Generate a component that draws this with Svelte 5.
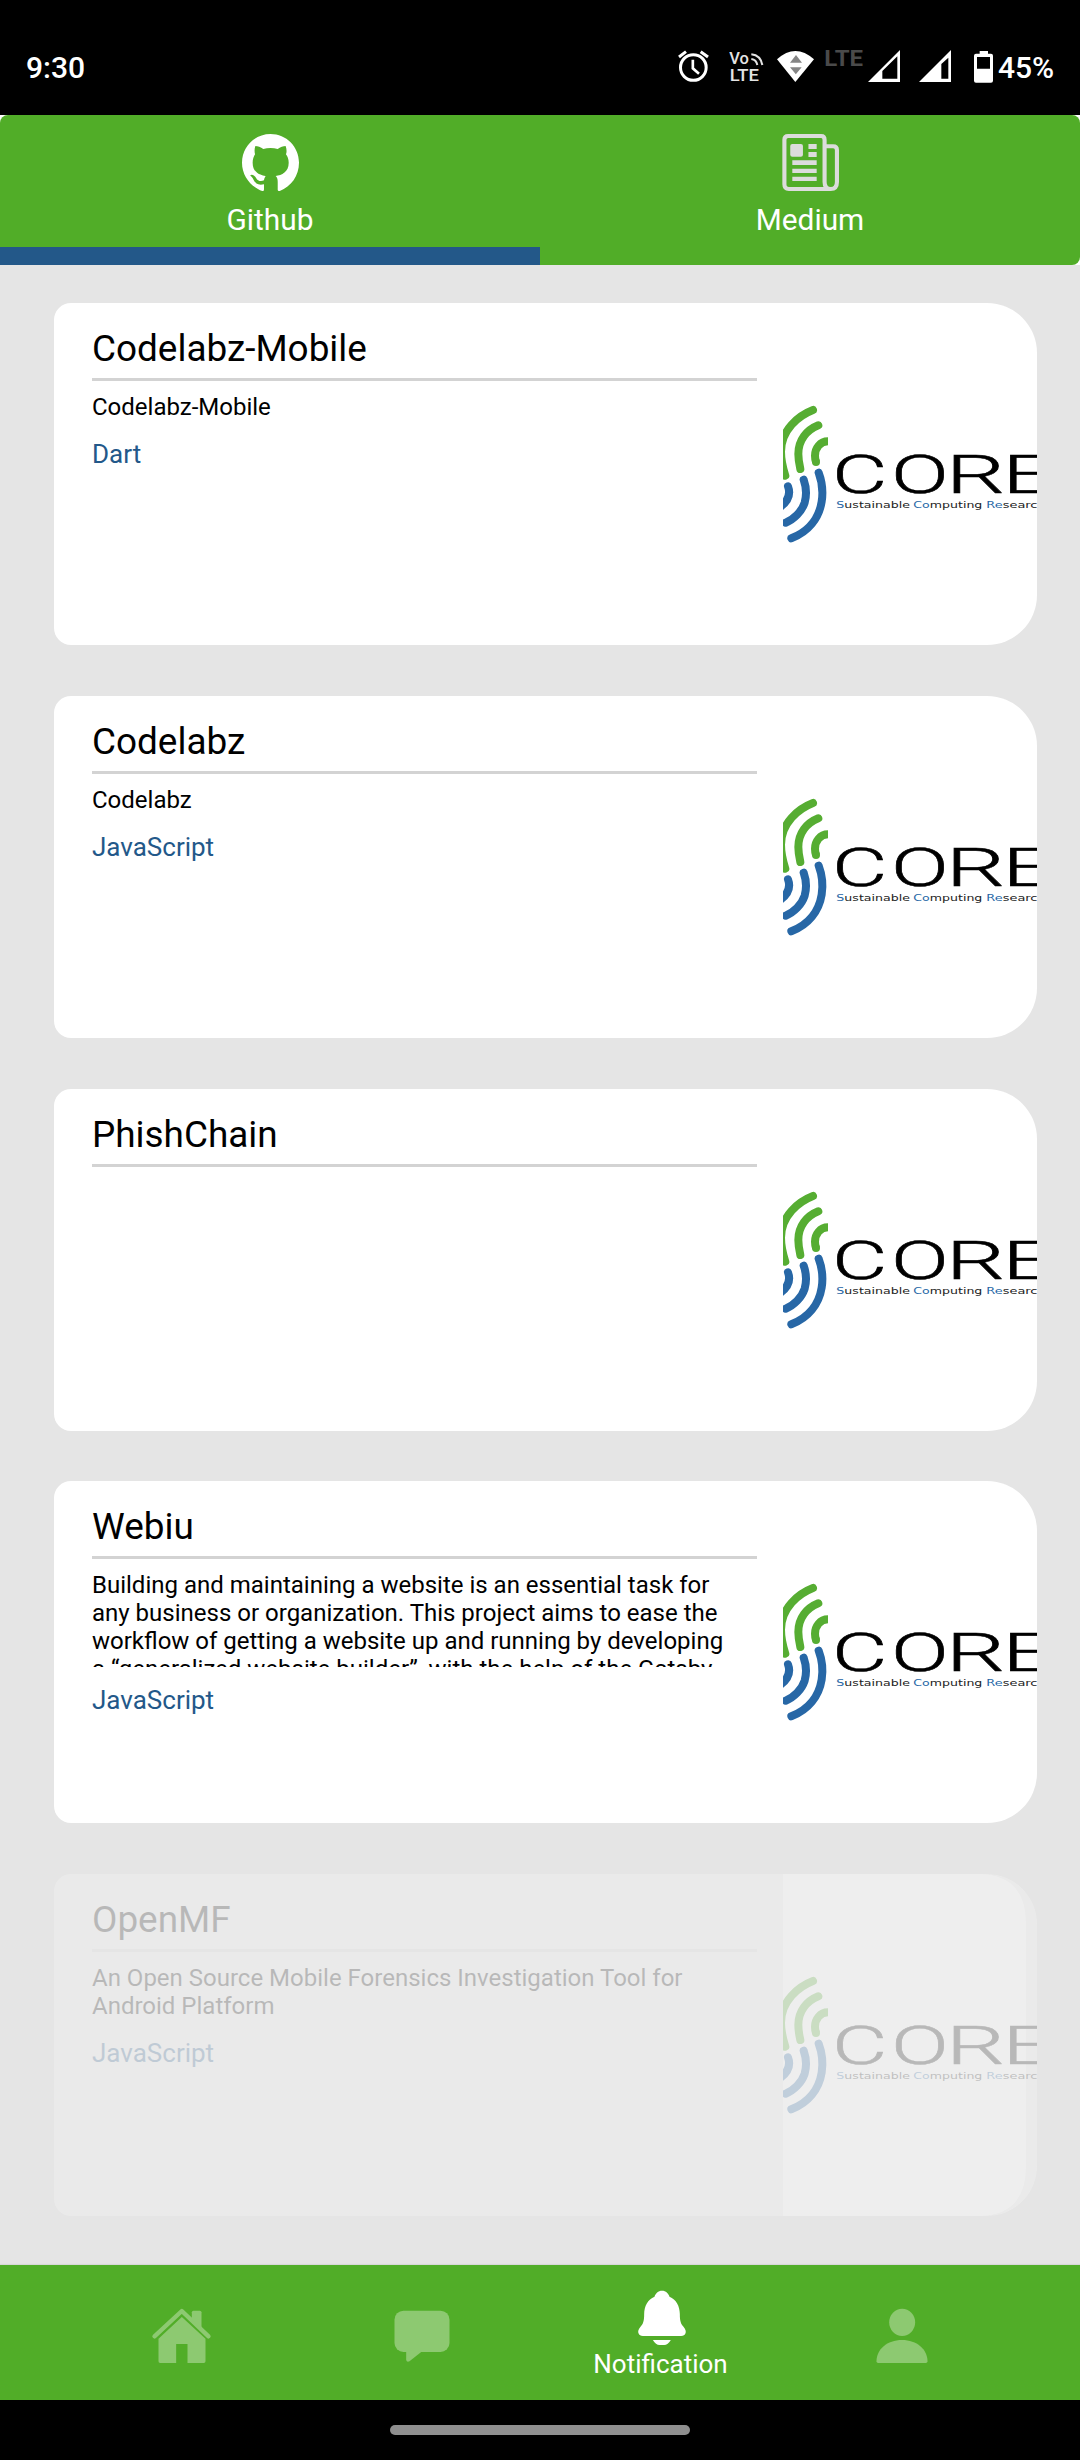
<script>
  const repos = [
    { name: 'Codelabz-Mobile', about: 'Codelabz-Mobile', language: 'Dart' },
    { name: 'Codelabz', about: 'Codelabz', language: 'JavaScript' },
    { name: 'PhishChain', about: '', language: '' },
    {
      name: 'Webiu',
      about:
        'Building and maintaining a website is an essential task for any business or organization. This project aims to ease the workflow of getting a website up and running by developing a “generalized website builder”, with the help of the Gatsby',
      language: 'JavaScript'
    },
    {
      name: 'OpenMF',
      about: 'An Open Source Mobile Forensics Investigation Tool for Android Platform',
      language: 'JavaScript',
      fading: true
    }
  ];

  // Extended wordmark: each letter is stretched to its own width.
  const wordmark = [
    { letter: 'C', x: 276, stretch: 1.6 },
    { letter: 'O', x: 453, stretch: 1.6 },
    { letter: 'R', x: 617, stretch: 1.76 },
    { letter: 'E', x: 786, stretch: 1.76 }
  ];
</script>

<div class="screen">
  <div class="status">
    <span class="clock">9:30</span>
    <div class="indicators">
      <svg class="alarm" viewBox="54 54 93 108" width="31" height="36" fill="none" stroke="#fff" stroke-width="9">
        <circle cx="100" cy="112.5" r="38.5" />
        <path d="M98.500 89V115L117 131" stroke-width="8" />
        <path d="M57 81L78 65M122 65L144 81" />
      </svg>
      <svg class="volte" viewBox="207 54 105 108" width="35" height="36">
        <text x="208" y="102" font-size="47" font-weight="500" fill="#e4e4e4" textLength="59" lengthAdjust="spacingAndGlyphs">Vo</text>
        <text x="209" y="154" font-size="49" font-weight="500" fill="#e4e4e4" textLength="88" lengthAdjust="spacingAndGlyphs">LTE</text>
        <path d="M274 87Q289 89 292 105M274 73Q302 76 307 105" fill="none" stroke="#e4e4e4" stroke-width="6" />
      </svg>
      <svg class="wifi" viewBox="351 54 114 108" width="38" height="36">
        <path d="M351 88Q406 38 462 88L406 156Z" fill="#fff" />
        <path d="M390 98L408 75L426 98ZM390 112H425L407.500 133Z" fill="#858585" />
      </svg>
      <svg class="lte" viewBox="495 54 114 108" width="38" height="36">
        <text x="493" y="109" font-size="66" font-weight="700" fill="#4a4a4a" textLength="116" lengthAdjust="spacingAndGlyphs">LTE</text>
      </svg>
      <svg class="sim1" viewBox="624 54 96 108" width="32" height="36">
        <path fill="#fff" fill-rule="evenodd" d="M624 156L720 60V156ZM667 146H712V79L667 123Z" />
      </svg>
      <svg class="sim2" viewBox="777 54 96 108" width="32" height="36">
        <path fill="#fff" fill-rule="evenodd" d="M777 156L873 60V156ZM844 146H865V83L844 102Z" />
      </svg>
      <svg class="battery" viewBox="939 54 63 108" width="21" height="36">
        <path
          fill="#fff"
          fill-rule="evenodd"
          d="M959 71V63H984V71H993Q999 71 999 77V152Q999 158 993 158H948Q942 158 942 152V77Q942 71 948 71ZM951 81V116H990V81Z"
        />
      </svg>
      <span class="percent">45%</span>
    </div>
  </div>

  <div class="tabs-back">
    <div class="tabs">
      <div class="tab active">
        <svg viewBox="702 402 166 171" width="57" height="57" preserveAspectRatio="none" fill="#fff">
          <path
            d="M785 402C739 402 702 440 702 488C702 527 727 560 761 573C764 573 766 572 766 569V553C747 557 741 549 736 540C733 533 731 530 726 527C728 522 737 523 743 534C748 544 758 545 766 541C767 535 768 532 771 528C752 525 733 516 733 488C733 478 736 469 740 463C738 456 738 445 741 438C747 438 757 441 764 447C777 443 793 443 806 447C813 441 823 438 829 438C832 446 833 456 830 463C835 469 838 478 838 488C838 516 818 525 800 528C804 532 806 537 806 545V569C806 572 808 574 812 573C845 560 868 527 868 488C868 440 831 402 785 402Z"
          />
        </svg>
        <span class="tab-label">Github</span>
      </div>
      <div class="tab">
        <svg viewBox="702 102 166 171" width="57" height="57" preserveAspectRatio="none" fill="#dcdcdc">
          <path
            fill="none"
            stroke="#dcdcdc"
            stroke-width="12"
            d="M846 267H722Q709 267 709 253V119Q709 108 720 108H816Q826 108 826 119V246Q826 267 844 267Q862 267 862 246V150Q862 139 851 139H830"
          />
          <rect x="726" y="132" width="37" height="38" rx="6" />
          <path d="M779 132H803V147H779ZM779 156H803V171H779ZM732 181H803V195H732ZM732 206H803V219H732ZM732 230H803V243H732Z" />
        </svg>
        <span class="tab-label">Medium</span>
      </div>
    </div>
  </div>

  <div class="list">
    {#each repos as repo}
      <div class="card" class:fading={repo.fading}>
        <div class="info">
          <div class="name">{repo.name}</div>
          <div class="about">{repo.about}</div>
          <div class="language">{repo.language}</div>
        </div>
        <svg class="thumb" viewBox="129 -231 762 1026" width="254" height="342">
          <path d="M129 -231H714Q858 -231 858 -81V645Q858 795 714 795H129Z" fill="#fff" />
          <g fill="none" stroke="#56ad32" stroke-width="24" stroke-linecap="round">
            <path d="M219 90C175 107 123 150 123 215C123 245 130 268 136 287" />
            <path d="M235 136C200 150 175 180 175 222C175 240 178 254 181 267" />
            <path d="M264 184C240 184 225 205 225 227C225 234 226 240 228 246" stroke-linecap="butt" />
          </g>
          <circle cx="228" cy="246" r="12" fill="#56ad32" />
          <g fill="none" stroke="#2767a6" stroke-width="24" stroke-linecap="round">
            <path d="M144 319C153 343 145 362 122 380" />
            <path d="M191 299C202 330 199 350 194 368C185 395 162 418 137 428" />
            <path d="M236 278C248 310 249 340 245 365C237 415 205 455 154 475" />
          </g>
          <g class="wordmark">
            {#each wordmark as glyph}
              <text transform="translate({glyph.x} 340) scale({glyph.stretch} 1)">{glyph.letter}</text>
            {/each}
          </g>
          <g class="tagline">
            <text x="289" y="383" textLength="221" lengthAdjust="spacingAndGlyphs"><tspan class="hi">S</tspan>ustainable</text>
            <text x="520" y="383" textLength="207" lengthAdjust="spacingAndGlyphs"><tspan class="hi">Co</tspan>mputing</text>
            <text x="739" y="383" textLength="178" lengthAdjust="spacingAndGlyphs"><tspan class="hi">Re</tspan>search</text>
          </g>
        </svg>
      </div>
    {/each}
  </div>

  <div class="nav">
    <div class="item">
      <svg viewBox="58.500 102 192 180" width="64" height="60" fill="#8dc971">
        <path d="M72 199L154 123L234 199" fill="none" stroke="#8dc971" stroke-width="13" stroke-linecap="round" stroke-linejoin="round" />
        <path d="M184 127Q184 122 189 122H208Q213 122 213 127V176L184 148Z" />
        <path d="M154 141L225 206V274Q225 279 220 279H171V222H137V279H89Q84 279 84 274V206Z" />
      </svg>
    </div>
    <div class="item">
      <svg viewBox="778.500 102 192 180" width="64" height="60" fill="#8dc971">
        <rect x="792" y="122" width="165" height="124" rx="27" />
        <path d="M827 240V270Q829 278 837 274L873 245Z" />
      </svg>
    </div>
    <div class="item selected">
      <svg viewBox="148.500 48 192 180" width="64" height="60" fill="#fff">
        <path
          d="M244.500 62C233 62 225 70 222 80C202 88 191 108 191 132C191 155 187 163 180 170C173 178 172 185 174 190Q177 198 187 198H302Q312 198 315 190C317 185 316 178 309 170C302 163 298 155 298 132C298 108 287 88 267 80C264 70 256 62 244.500 62Z"
        />
        <path d="M217 210H271Q262 225 251 225H237Q226 225 217 210Z" />
      </svg>
      <span class="nav-label">Notification</span>
    </div>
    <div class="item">
      <svg viewBox="868.500 102 192 180" width="64" height="60" fill="#8dc971">
        <ellipse cx="965" cy="157" rx="39" ry="41" />
        <path d="M888 274C888 238 920 210 964.500 210S1041 238 1041 274Q1041 279 1036 279H893Q888 279 888 274Z" />
      </svg>
    </div>
  </div>

  <div class="gesture"><div class="handle"></div></div>
</div>

<style>
  :global(body) {
    background: #000;
  }
  .screen {
    width: 1080px;
    height: 2460px;
    display: flex;
    flex-direction: column;
    background: #e5e5e5;
    font-family: Roboto, 'Liberation Sans', sans-serif;
    overflow: hidden;
  }
  svg {
    display: block;
    flex: none;
  }
  .status {
    height: 115px;
    flex: none;
    box-sizing: border-box;
    padding: 48px 0 0 26px;
    display: flex;
    justify-content: space-between;
    background: #000;
    color: #fff;
    font-size: 30px;
    font-weight: 500;
    line-height: 38px;
  }
  .clock {
    margin-top: 1px;
  }
  .indicators {
    display: flex;
    width: 402px;
  }
  .volte {
    margin-left: 20px;
  }
  .wifi {
    margin-left: 13px;
  }
  .lte {
    margin-left: 10px;
    overflow: visible;
  }
  .sim1 {
    margin-left: 5px;
  }
  .sim2 {
    margin-left: 19px;
  }
  .battery {
    margin-left: 22px;
  }
  .percent {
    margin: 1px 0 0 4px;
  }

  .tabs-back {
    flex: none;
    background: #fff;
  }
  .tabs {
    height: 150px;
    display: flex;
    background: #51ad28;
    border-radius: 8px 8px 8px 0;
    overflow: hidden;
  }
  .tab {
    flex: 1;
    box-sizing: border-box;
    padding-top: 19px;
    display: flex;
    flex-direction: column;
    align-items: center;
    gap: 11px;
    border-bottom: 18px solid transparent;
  }
  .tab.active {
    border-bottom-color: #235889;
  }
  .tab-label {
    color: #fff;
    font-size: 29.800px;
    line-height: 36px;
  }

  .list {
    flex: 1;
    padding: 38px 43px 0 54px;
    display: flex;
    flex-direction: column;
    gap: 50.750px;
  }
  .card {
    --strength: 1;
    height: 342px;
    flex: none;
    display: flex;
    justify-content: space-between;
    background: rgba(255, 255, 255, var(--strength));
    border-radius: 17px 50px 50px 17px;
    overflow: hidden;
  }
  .card.fading {
    --strength: 0.21;
  }
  .info {
    width: 665px;
    margin-left: 38px;
    opacity: var(--strength);
  }
  .name {
    height: 78px;
    box-sizing: border-box;
    padding-top: 24px;
    border-bottom: 3px solid #d3d3d3;
    color: #000;
    font-size: 36.900px;
    line-height: 44px;
  }
  .about {
    max-width: 642px;
    max-height: 96px;
    margin-top: 12px;
    overflow: hidden;
    color: #000;
    font-size: 24px;
    line-height: 28px;
  }
  .language {
    margin-top: 17px;
    color: #235889;
    font-size: 26px;
    line-height: 32px;
  }
  .thumb {
    opacity: var(--strength);
  }
  .wordmark {
    font-size: 160px;
    font-weight: 300;
    fill: #000;
    stroke: #000;
    stroke-width: 1.500px;
  }
  .tagline {
    font-family: 'DejaVu Sans', sans-serif;
    font-size: 25px;
    fill: #222;
  }
  .hi {
    fill: #2767a6;
  }

  .nav {
    height: 135px;
    flex: none;
    box-sizing: border-box;
    padding: 0 58.500px 0 61.500px;
    display: flex;
    background: #51ad28;
    box-shadow: 0 -1px 1px rgba(0, 0, 0, 0.06);
  }
  .item {
    flex: 1;
    padding-top: 39px;
    display: flex;
    flex-direction: column;
    align-items: center;
  }
  .item.selected {
    padding-top: 21px;
  }
  .nav-label {
    margin: 3px 2px 0 0;
    color: #fff;
    font-size: 26px;
    line-height: 30px;
  }
  .gesture {
    height: 60px;
    flex: none;
    box-sizing: border-box;
    padding-top: 25px;
    background: #000;
  }
  .handle {
    width: 300px;
    height: 10px;
    margin: 0 auto;
    border-radius: 5px;
    background: #8f8f8f;
  }
</style>
